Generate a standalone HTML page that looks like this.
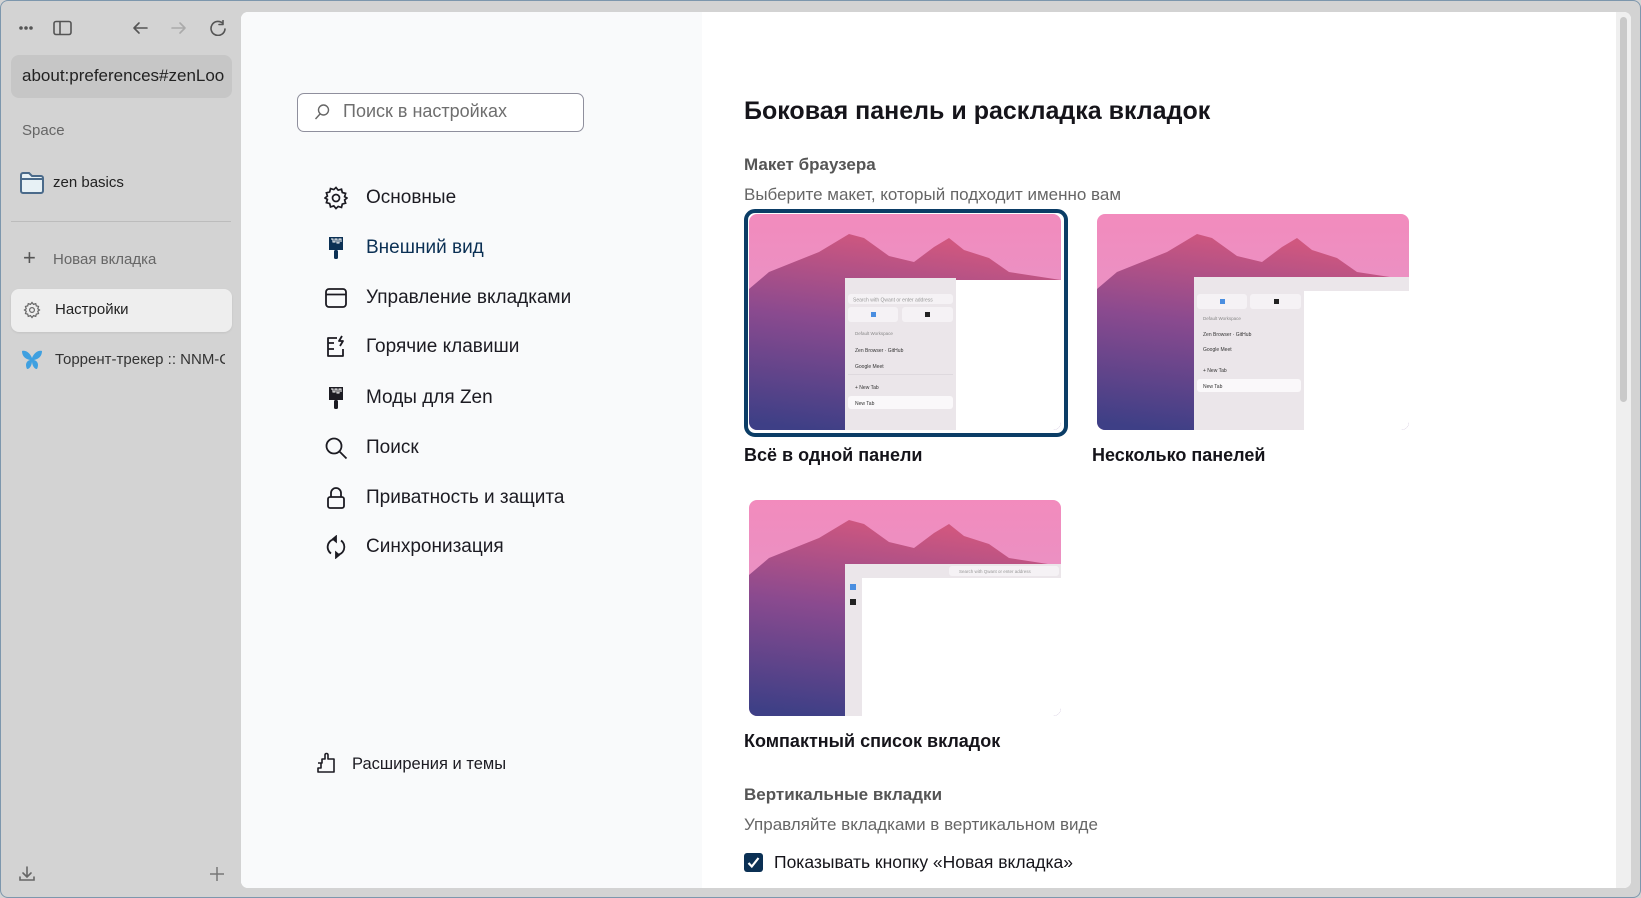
<!DOCTYPE html>
<html><head><meta charset="utf-8"><style>
*{box-sizing:border-box;margin:0;padding:0}
html,body{width:1641px;height:898px;overflow:hidden}
body{background:#d3d3d3;font-family:"Liberation Sans","Noto Sans CJK SC",sans-serif;position:relative;border:1px solid #7d97ad;border-radius:8px}
.a{position:absolute;white-space:nowrap}
.panel{position:absolute;left:240px;top:11px;width:1390px;height:876px;background:#fff;border-radius:7px;overflow:hidden}
.nav{position:absolute;left:0;top:0;width:461px;height:100%;background:#f9fafb}
.ni{position:absolute;left:83px;height:30px;display:flex;align-items:center;font-size:19px;color:#1c1b22}
.ni svg{width:24px;height:24px;margin-right:18px;flex:none}
.side{color:#222;font-size:15px}
.card{position:absolute;width:312px;height:216px;border-radius:8px;overflow:hidden}
.lbl{font-size:18px;font-weight:bold;color:#15141a}
</style></head><body>
<svg width="0" height="0" style="position:absolute"><defs>
<linearGradient id="sky" x1="0" y1="0" x2="0" y2="1"><stop offset="0" stop-color="#f28bbd"/><stop offset="1" stop-color="#dc9ccf"/></linearGradient>
<linearGradient id="mt" x1="0.4" y1="0" x2="0.2" y2="1"><stop offset="0" stop-color="#d0577f"/><stop offset="0.45" stop-color="#8a4a8f"/><stop offset="1" stop-color="#3e3f86"/></linearGradient>
</defs></svg>

<svg class="a" style="left:17px;top:19px" width="210" height="16" viewBox="0 0 210 16" fill="none" stroke="#555" stroke-width="1.6" stroke-linecap="round" stroke-linejoin="round">
<circle cx="3" cy="8" r="1" fill="#555"/><circle cx="8" cy="8" r="1" fill="#555"/><circle cx="13" cy="8" r="1" fill="#555"/>
<rect x="36" y="1.5" width="17" height="13" rx="2"/><line x1="42" y1="2" x2="42" y2="14"/>
<path d="M129 8H116M121 3l-5 5 5 5"/>
<path d="M154 8h13M162 3l5 5-5 5" stroke="#aaa"/>
<path d="M205 3.5A7 7 0 1 0 207 9M205 0.5v4h-4"/>
</svg>
<div class="a" style="left:10px;top:54px;width:221px;height:43px;background:#c6c6c6;border-radius:8px;overflow:hidden">
<div class="a" style="left:11px;top:11px;font-size:17px;color:#222">about:preferences#zenLoo</div></div>
<div class="a" style="left:21px;top:121px;font-size:15px;color:#666">Space</div>
<svg class="a" style="left:18px;top:170px" width="26" height="24" viewBox="0 0 26 24"><path d="M2 4a2 2 0 0 1 2-2h6l3 3h9a2 2 0 0 1 2 2v13a2 2 0 0 1-2 2H4a2 2 0 0 1-2-2z" fill="#e7f1f5" stroke="#4a6a8a" stroke-width="2"/><path d="M2 8h22" stroke="#4a6a8a" stroke-width="2"/></svg>
<div class="a side" style="left:52px;top:173px">zen basics</div>
<div class="a" style="left:10px;top:220px;width:220px;height:1px;background:#bcbcbc"></div>
<div class="a" style="left:22px;top:247px;font-size:22px;color:#555;line-height:20px">+</div>
<div class="a" style="left:52px;top:250px;font-size:15px;color:#666">Новая вкладка</div>
<div class="a" style="left:10px;top:288px;width:221px;height:43px;background:#eeeeee;border-radius:8px;box-shadow:0 1px 2px rgba(0,0,0,.08)"></div>
<svg class="a" style="left:22px;top:300px" width="18" height="18" viewBox="0 0 24 24" fill="none" stroke="#666" stroke-width="1.6"><path d="M12 2l2 2.5 3-1 .7 3 3 .8-1 3L22 12l-2.3 1.7 1 3-3 .8-.7 3-3-1L12 22l-2-2.5-3 1-.7-3-3-.8 1-3L2 12l2.3-1.7-1-3 3-.8.7-3 3 1z"/><circle cx="12" cy="12" r="3.2"/></svg>
<div class="a side" style="left:54px;top:300px">Настройки</div>
<svg class="a" style="left:20px;top:349px" width="22" height="20" viewBox="0 0 22 20"><path d="M11 8C9 3 5 0 1 1c0 5 3 8 8 9-4 1-5 5-3 9 3 0 5-4 5-8 0 4 2 8 5 8 2-4 1-8-3-9 5-1 8-4 8-9-4-1-8 2-10 7z" fill="#3fa0e0"/></svg>
<div class="a" style="left:54px;top:350px;font-size:15px;color:#333;width:170px;overflow:hidden">Торрент-трекер :: NNM-Club</div>
<svg class="a" style="left:17px;top:864px" width="18" height="18" viewBox="0 0 18 18" fill="none" stroke="#666" stroke-width="1.6" stroke-linecap="round"><path d="M9 2v9M5 8l4 4 4-4M2 12v3h14v-3"/></svg>
<svg class="a" style="left:208px;top:865px" width="16" height="16" viewBox="0 0 16 16" stroke="#777" stroke-width="1.5"><path d="M8 1v14M1 8h14"/></svg>

<div class="panel">
<div class="nav">
<div class="a" style="left:56px;top:81px;width:287px;height:39px;border:1px solid #8f8f9d;border-radius:7px;background:#fff"></div>
<svg class="a" style="left:73px;top:91px" width="16" height="18" viewBox="0 0 16 18" fill="none" stroke="#666" stroke-width="1.4"><circle cx="9.5" cy="7" r="5"/><path d="M6 11l-4.5 5"/></svg>
<div class="a" style="left:102px;top:89px;font-size:18px;color:#6e6e6e">Поиск в настройках</div>

<div class="ni" style="top:171px"><svg viewBox="0 0 24 24" fill="none" stroke="#1c1b22" stroke-width="1.7"><path d="M12 1.5l2.2 2.7 3.3-1 .8 3.3 3.3.9-1 3.3L23 12l-2.4 1.900 1 3.3-3.3.9-.8 3.3-3.3-1L12 22.5l-2.2-2.6-3.3 1-.8-3.3-3.3-.9 1-3.3L1 12l2.4-1.9-1-3.3 3.3-.9.8-3.3 3.3 1z"/><circle cx="12" cy="12" r="3.5"/></svg>Основные</div>
<div class="ni" style="top:221px;color:#0b3054"><svg viewBox="0 0 24 24"><path d="M5 1h14v13H5z" fill="#0b3054"/><path d="M7 3h2v3h2V3h2v4h2V3h2v3" stroke="#fff" stroke-width="1" fill="none"/><rect x="10" y="14" width="4" height="9" rx="1.5" fill="#0b3054"/></svg>Внешний вид</div>
<div class="ni" style="top:271px"><svg viewBox="0 0 24 24" fill="none" stroke="#1c1b22" stroke-width="1.8"><rect x="2" y="3" width="20" height="18" rx="3"/><path d="M2 8.5h20"/></svg>Управление вкладками</div>
<div class="ni" style="top:320px"><svg viewBox="0 0 24 24" fill="none" stroke="#1c1b22" stroke-width="1.8" stroke-linejoin="round"><path d="M13 3H4v18h15v-7M4 8h6M4 14h6"/><path d="M18 1l-3 5h4l-3 5"/></svg>Горячие клавиши</div>
<div class="ni" style="top:371px"><svg viewBox="0 0 24 24"><path d="M5 1h14v13H5z" fill="#1c1b22"/><path d="M7 3h2v3h2V3h2v4h2V3h2v3" stroke="#fff" stroke-width="1" fill="none"/><rect x="10" y="14" width="4" height="9" rx="1.5" fill="#1c1b22"/></svg>Моды для Zen</div>
<div class="ni" style="top:421px"><svg viewBox="0 0 24 24" fill="none" stroke="#1c1b22" stroke-width="1.8"><circle cx="10" cy="10" r="7.5"/><path d="M15.5 15.5l7 7"/></svg>Поиск</div>
<div class="ni" style="top:471px"><svg viewBox="0 0 24 24" fill="none" stroke="#1c1b22" stroke-width="1.8"><rect x="4" y="11" width="16" height="11" rx="2"/><path d="M7 11V7a5 5 0 0 1 10 0v4"/></svg>Приватность и защита</div>
<div class="ni" style="top:520px"><svg viewBox="0 0 24 24" fill="none" stroke="#1c1b22" stroke-width="1.8"><path d="M17 5.5A8 8 0 0 1 12 20M7 18.5A8 8 0 0 1 12 4"/><path d="M12 1.5v5l-3-2.5zM12 22.5v-5l3 2.5z" fill="#1c1b22"/></svg>Синхронизация</div>

<svg class="a" style="left:75px;top:740px" width="20" height="22" viewBox="0 0 20 22" fill="none" stroke="#1c1b22" stroke-width="1.6" stroke-linejoin="round"><path d="M2 11h4V7h3V3c0-2 3-2 3 0v4h6v13H2v-4h3v-5"/></svg>
<div class="a" style="left:111px;top:743px;font-size:16.5px;color:#1c1b22">Расширения и темы</div>
</div>

<div class="a" style="left:503px;top:85px;font-size:25px;font-weight:bold;color:#15141a">Боковая панель и раскладка вкладок</div>
<div class="a" style="left:503px;top:143px;font-size:17px;font-weight:bold;color:#555">Макет браузера</div>
<div class="a" style="left:503px;top:173px;font-size:17px;color:#666">Выберите макет, который подходит именно вам</div>

<div class="a" style="left:503px;top:197px;width:324px;height:228px;border:4px solid #0b3d66;border-radius:11px"></div>
<div class="card" style="left:508px;top:202px"><svg width="312" height="216" viewBox="0 0 312 216"><rect width="312" height="216" fill="url(#sky)"/><path d="M0 75 20 58 45 48 70 38 100 20 115 24 140 42 165 48 185 33 200 24 215 36 240 44 260 58 312 66V216H0z" fill="url(#mt)"/><rect x="96" y="64" width="111" height="152" fill="#ebe6ea"/><rect x="207" y="66" width="105" height="150" fill="#fff"/><rect x="99" y="80" width="105" height="10" rx="3" fill="#f5f2f5"/><text x="104" y="87.5" font-size="5" fill="#999">Search with Qwant or enter address</text><rect x="99" y="93" width="50" height="15" rx="3" fill="#f5f2f5"/><rect x="153" y="93" width="51" height="15" rx="3" fill="#f5f2f5"/><rect x="122" y="98" width="5" height="5" fill="#4a8ee0"/><rect x="176" y="98" width="5" height="5" fill="#222"/><text x="106" y="121" font-size="4.5" fill="#888">Default Workspace</text><text x="106" y="138" font-size="5" fill="#333">Zen Browser · GitHub</text><text x="106" y="154" font-size="5" fill="#333">Google Meet</text><rect x="99" y="160" width="105" height=".6" fill="#d6d0d6"/><text x="106" y="175" font-size="5" fill="#333">+ New Tab</text><rect x="99" y="182" width="105" height="13" rx="3" fill="#faf8fa"/><text x="106" y="191" font-size="5" fill="#333">New Tab</text></svg></div>
<div class="a lbl" style="left:503px;top:433px">Всё в одной панели</div>

<div class="card" style="left:856px;top:202px"><svg width="312" height="216" viewBox="0 0 312 216"><rect width="312" height="216" fill="url(#sky)"/><path d="M0 75 20 58 45 48 70 38 100 20 115 24 140 42 165 48 185 33 200 24 215 36 240 44 260 58 312 66V216H0z" fill="url(#mt)"/><rect x="97" y="63" width="215" height="14" fill="#ebe6ea"/><rect x="97" y="77" width="110" height="139" fill="#ebe6ea"/><rect x="207" y="77" width="105" height="139" fill="#fff"/><rect x="100" y="80" width="50" height="15" rx="3" fill="#f5f2f5"/><rect x="153" y="80" width="51" height="15" rx="3" fill="#f5f2f5"/><rect x="123" y="85" width="5" height="5" fill="#4a8ee0"/><rect x="177" y="85" width="5" height="5" fill="#222"/><text x="106" y="106" font-size="4.5" fill="#888">Default Workspace</text><text x="106" y="122" font-size="5" fill="#333">Zen Browser · GitHub</text><text x="106" y="137" font-size="5" fill="#333">Google Meet</text><text x="106" y="158" font-size="5" fill="#333">+ New Tab</text><rect x="100" y="165" width="104" height="13" rx="3" fill="#faf8fa"/><text x="106" y="174" font-size="5" fill="#333">New Tab</text></svg></div>
<div class="a lbl" style="left:851px;top:433px">Несколько панелей</div>

<div class="card" style="left:508px;top:488px"><svg width="312" height="216" viewBox="0 0 312 216"><rect width="312" height="216" fill="url(#sky)"/><path d="M0 75 20 58 45 48 70 38 100 20 115 24 140 42 165 48 185 33 200 24 215 36 240 44 260 58 312 66V216H0z" fill="url(#mt)"/><rect x="96" y="64" width="216" height="14" fill="#ebe6ea"/><rect x="96" y="78" width="17" height="138" fill="#ebe6ea"/><rect x="113" y="78" width="199" height="138" fill="#fff"/><rect x="200" y="66" width="110" height="10" rx="3" fill="#f5f2f5"/><text x="210" y="73" font-size="4.5" fill="#999">Search with Qwant or enter address</text><rect x="101" y="84" width="6" height="6" fill="#4a8ee0"/><rect x="101" y="99" width="6" height="6" fill="#222"/></svg></div>
<div class="a lbl" style="left:503px;top:719px">Компактный список вкладок</div>

<div class="a" style="left:503px;top:773px;font-size:17px;font-weight:bold;color:#555">Вертикальные вкладки</div>
<div class="a" style="left:503px;top:803px;font-size:17px;color:#666">Управляйте вкладками в вертикальном виде</div>
<div class="a" style="left:503px;top:841px;width:19px;height:19px;background:#0b3054;border-radius:3px"></div>
<svg class="a" style="left:505px;top:843px" width="15" height="15" viewBox="0 0 15 15" fill="none" stroke="#fff" stroke-width="2.2"><path d="M2.5 8l3.3 3.5L12.5 3"/></svg>
<div class="a" style="left:533px;top:840px;font-size:17.5px;color:#15141a">Показывать кнопку «Новая вкладка»</div>

<div class="a" style="left:1375px;top:0;width:15px;height:876px;background:#efefef"></div>
<div class="a" style="left:1379px;top:5px;width:7px;height:385px;background:#c9c9c9;border-radius:4px"></div>
</div>
</body></html>
